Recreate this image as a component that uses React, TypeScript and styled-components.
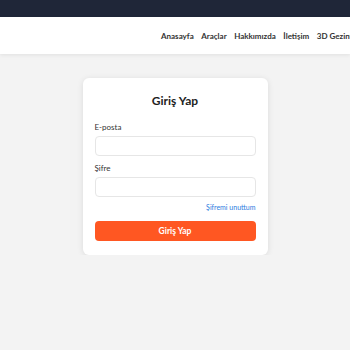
import React, { useState } from "react";
import styled, { createGlobalStyle } from "styled-components";

const GlobalStyle = createGlobalStyle`
  * { box-sizing: border-box; }
  body {
    margin: 0;
    background: #f3f3f3;
    font-family: Lato, "Open Sans", sans-serif;
    color: #222;
    overflow: hidden;
  }
`;

const TopBar = styled.div`
  height: 17px;
  background: #1f2638;
`;

const Nav = styled.nav`
  height: 37px;
  background: #ffffff;
  box-shadow: 0 1px 4px rgba(0, 0, 0, 0.08);
  display: flex;
  align-items: center;
  padding-left: 161px;
  overflow: hidden;
  white-space: nowrap;
`;

const NavLink = styled.a`
  flex-shrink: 0;
  font-size: 8px;
  font-weight: 700;
  color: #333;
  margin-right: 7.5px;
  text-decoration: none;
`;

const Main = styled.main`
  display: flex;
  justify-content: center;
  padding-top: 24px;
`;

const Card = styled.div`
  width: 185px;
  background: #fff;
  border-radius: 6px;
  box-shadow: 0 1px 6px rgba(0, 0, 0, 0.1);
  padding: 15px 12px 14px;
`;

const Title = styled.h2`
  margin: 0 0 13px;
  text-align: center;
  font-size: 12px;
  line-height: 16px;
  font-weight: 700;
  color: #1e1e1e;
`;

const Field = styled.div`
  display: flex;
  flex-direction: column;
  & + & {
    margin-top: 7px;
  }
`;

const Label = styled.label`
  font-size: 8px;
  line-height: 10px;
  color: #333;
  margin-bottom: 4px;
`;

const Input = styled.input`
  height: 20px;
  border: 1px solid #e6e6e6;
  border-radius: 4px;
  padding: 0 6px;
  font-size: 8px;
  outline: none;
`;

const Forgot = styled.a`
  display: block;
  text-align: right;
  font-size: 7px;
  line-height: 10px;
  color: #2d7be0;
  margin: 5px 0 9px;
  text-decoration: none;
`;

const Submit = styled.button`
  display: block;
  width: 100%;
  height: 20px;
  border: none;
  border-radius: 4px;
  background: #ff5722;
  color: #fff;
  font-family: inherit;
  font-size: 8.5px;
  font-weight: 700;
  cursor: pointer;
`;

const links = ["Anasayfa", "Araçlar", "Hakkımızda", "İletişim", "3D Gezinti"];

const App = () => {
  const [email, setEmail] = useState("");
  const [password, setPassword] = useState("");

  return (
    <>
      <GlobalStyle />
      <TopBar />
      <Nav>
        {links.map((l) => (
          <NavLink key={l}>{l}</NavLink>
        ))}
      </Nav>
      <Main>
        <Card>
          <Title>Giriş Yap</Title>
          <Field>
            <Label>E-posta</Label>
            <Input value={email} onChange={(e) => setEmail(e.target.value)} />
          </Field>
          <Field>
            <Label>Şifre</Label>
            <Input
              type="password"
              value={password}
              onChange={(e) => setPassword(e.target.value)}
            />
          </Field>
          <Forgot>Şifremi unuttum</Forgot>
          <Submit>Giriş Yap</Submit>
        </Card>
      </Main>
    </>
  );
};

export default App;
